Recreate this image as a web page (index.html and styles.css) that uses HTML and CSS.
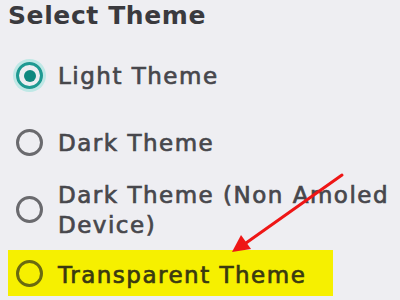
FILE: index.html
```
<!DOCTYPE html>
<html>
<head>
<meta charset="utf-8">
<link rel="stylesheet" href="styles.css">
</head>
<body>
<div class="page">
  <h1 class="title">Select Theme</h1>
  <div class="options">
    <div class="option">
      <span class="radio checked"><span class="dot"></span></span>
      <span class="label">Light Theme</span>
    </div>
    <div class="option">
      <span class="radio"></span>
      <span class="label">Dark Theme</span>
    </div>
    <div class="option">
      <span class="radio"></span>
      <span class="label">Dark Theme (Non Amoled Device)</span>
    </div>
    <div class="option highlight">
      <span class="radio"></span>
      <span class="label">Transparent Theme</span>
    </div>
  </div>
  <svg class="arrow" width="400" height="300" viewBox="0 0 400 300">
    <line x1="342" y1="175" x2="246" y2="243" stroke="#ee1616" stroke-width="3" stroke-linecap="round"/>
    <polygon points="232,252 241,235 251,249" fill="#ee1616"/>
  </svg>
</div>
</body>
</html>
```
FILE: styles.css
```
html, body {
  margin: 0;
  padding: 0;
  background: #eeeef2;
}
.page {
  position: relative;
  width: 400px;
  height: 300px;
  overflow: hidden;
  font-family: "DejaVu Sans", "Open Sans", sans-serif;
}
.title {
  margin: 0;
  padding: 1px 0 0 8px;
  height: 41px;
  font-size: 25px;
  font-weight: 700;
  letter-spacing: 0.6px;
  line-height: 30px;
  color: #3a3a3e;
}
.options {
  display: flex;
  flex-direction: column;
}
.option {
  display: flex;
  align-items: center;
  height: 67px;
  padding-left: 16px;
  gap: 15px;
}
.radio {
  flex: none;
  box-sizing: border-box;
  width: 27px;
  height: 27px;
  border: 3px solid #6a6a6e;
  border-radius: 50%;
  display: flex;
  align-items: center;
  justify-content: center;
}
.radio.checked {
  border-color: #1e9a92;
  box-shadow: 0 0 0 3px #bfe8e6;
}
.dot {
  width: 12px;
  height: 12px;
  border-radius: 50%;
  background: #10887f;
}
.label {
  font-size: 23px;
  font-weight: 400;
  letter-spacing: 1.5px;
  line-height: 30px;
  color: #47474c;
  width: 340px;
  -webkit-text-stroke: 0.7px #47474c;
}
.highlight {
  margin-top: 7px;
  margin-left: 8px;
  padding-left: 8px;
  padding-top: 3px;
  width: 325px;
  height: 46px;
  box-sizing: border-box;
  background: #f6f000;
}
.highlight .radio {
  border-color: #6a6a10;
  margin-top: -3px;
}
.highlight .label {
  color: #3a3a10;
  -webkit-text-stroke-color: #3a3a10;
}
.arrow {
  position: absolute;
  left: 0;
  top: 0;
}
```
